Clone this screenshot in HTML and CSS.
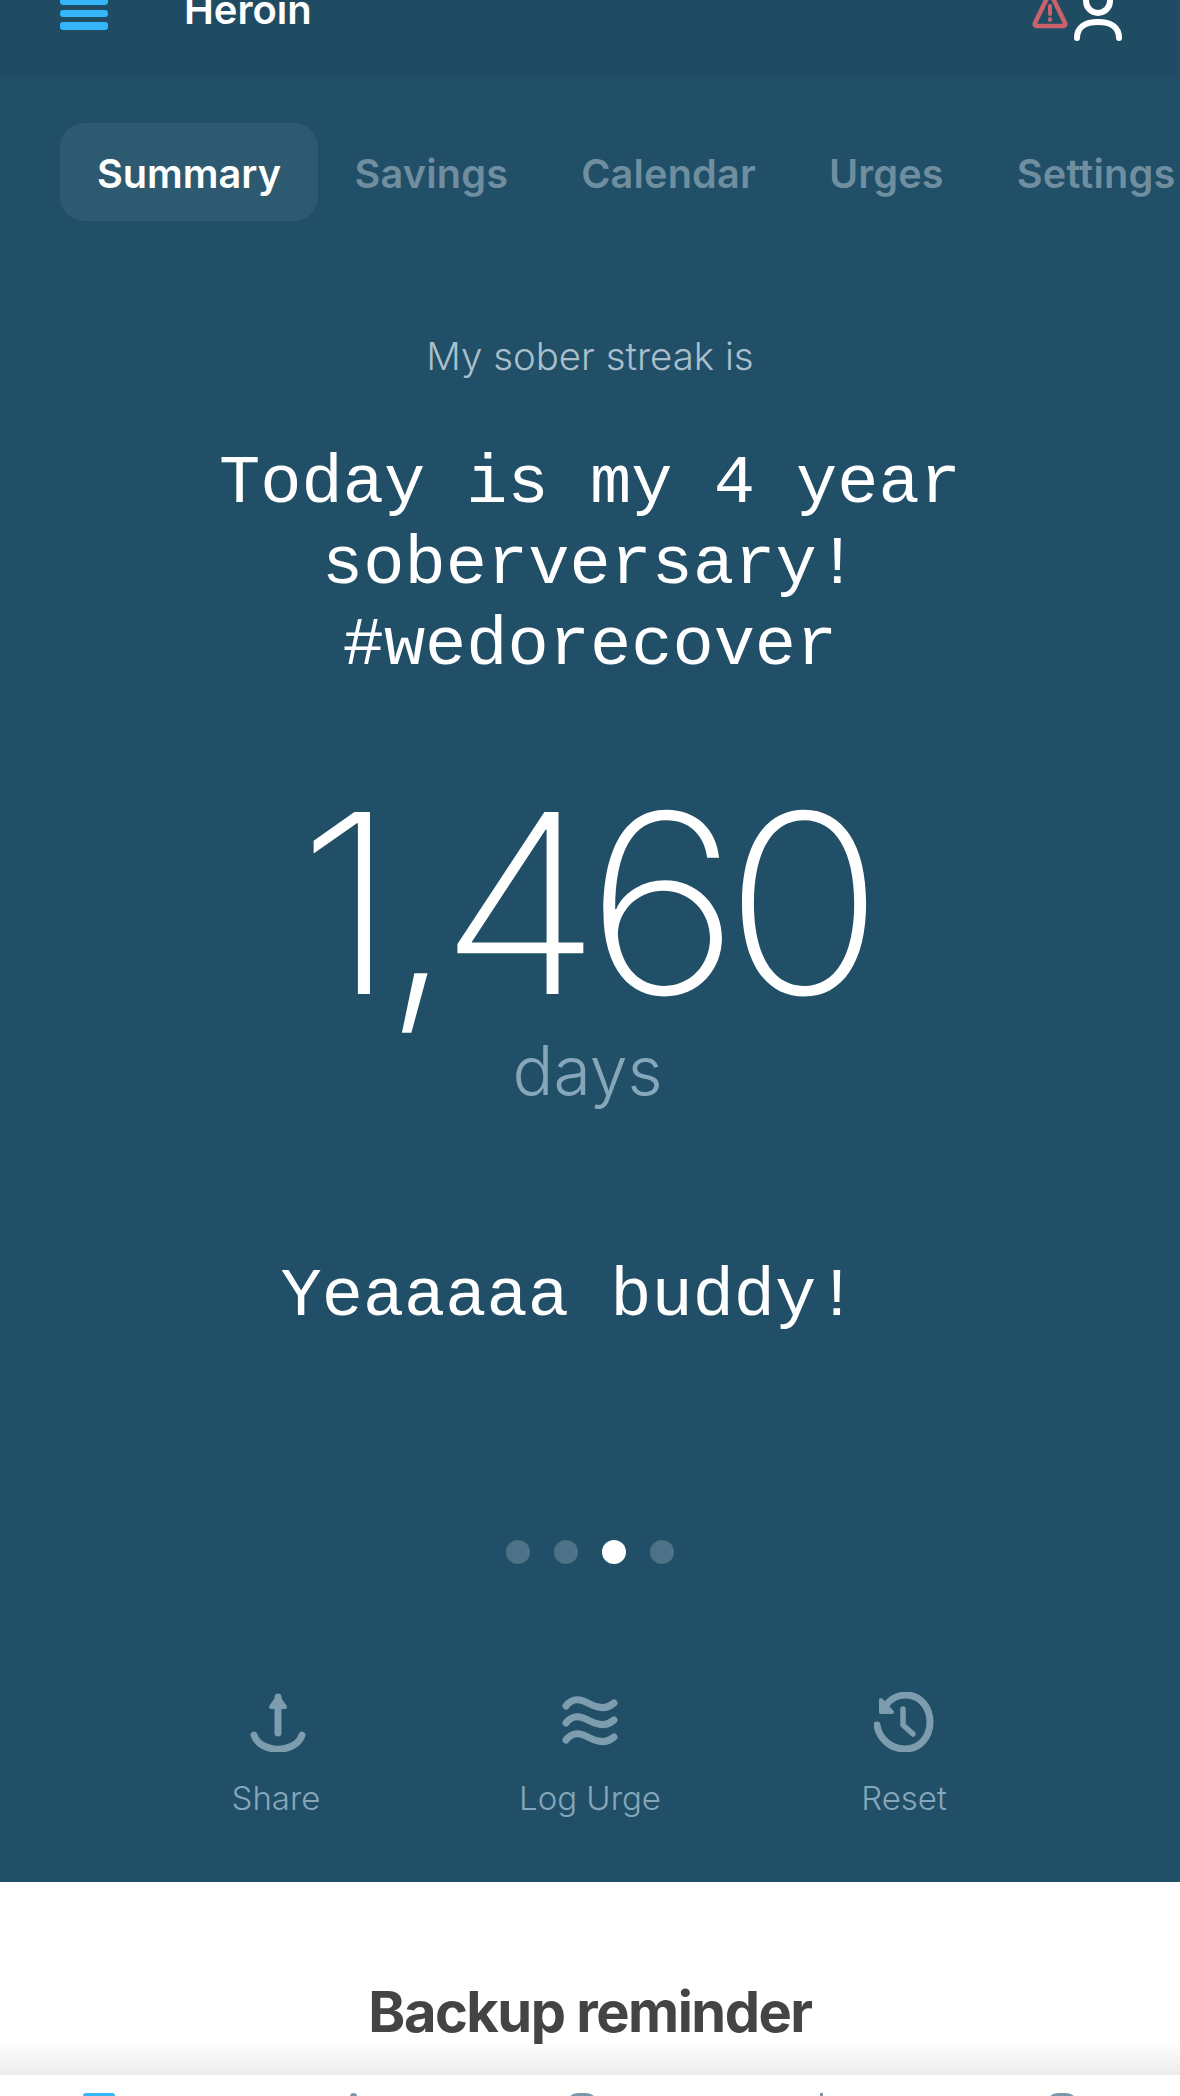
FILE: index.html
```html
<!DOCTYPE html>
<html lang="en">
<head>
    <meta charset="UTF-8" />
    <meta name="viewport" content="width=device-width, initial-scale=1.0" />
    <title>Heroin</title>
    <link rel="stylesheet" href="styles.css">
</head>
<body>

    <header class="top-bar">
        <svg class="menu-icon" width="48" height="30" viewBox="0 0 48 30">
            <rect x="0" y="-6" width="48" height="11" rx="3" />
            <rect x="0" y="10" width="48" height="7" rx="3" />
            <rect x="0" y="22" width="48" height="8" rx="3" />
        </svg>
        <div class="top-title">Heroin</div>
        <svg class="alert-icon" width="36" height="30" viewBox="0 0 36 30">
            <path d="M18 -8 L33 23 Q34 26 31 26 L5 26 Q2 26 3 23 Z" />
            <line class="alert-mark" x1="18" y1="6" x2="18" y2="14" />
            <line class="alert-mark" x1="18" y1="19" x2="18" y2="20" />
        </svg>
        <svg class="user-icon" width="48" height="42" viewBox="0 0 48 42">
            <circle cx="24" cy="1" r="12" />
            <path d="M3 38 C3 27 11 22 24 22 C37 22 45 27 45 38" />
        </svg>
    </header>

    <main class="streak-panel">
        <nav class="tabs">
            <div class="tab tab-active">Summary</div>
            <div class="tab">Savings</div>
            <div class="tab">Calendar</div>
            <div class="tab">Urges</div>
            <div class="tab">Settings</div>
        </nav>

        <p class="streak-intro">My sober streak is</p>
        <h1 class="streak-quote">Today is my 4 year<br>soberversary!<br>#wedorecover</h1>

        <div class="day-count">1,460</div>
        <div class="day-unit">days</div>

        <p class="streak-note">Yeaaaaa buddy!</p>

        <div class="dots">
            <span class="dot"></span>
            <span class="dot"></span>
            <span class="dot dot-active"></span>
            <span class="dot"></span>
        </div>

        <div class="actions">
            <div class="action">
                <svg width="60" height="60" viewBox="-2 0 60 60">
                    <path d="M30 41 L30 5" />
                    <path class="solid" d="M23 15 L30 5 L37 15 Z" />
                    <path d="M6 43 C12 62 48 62 54 43" />
                </svg>
                <span>Share</span>
            </div>
            <div class="action">
                <svg class="waves" width="60" height="60" viewBox="0 0 60 60">
                    <path d="M6 14 C13 5 21 7 30 12 C39 17 47 17 54 11" />
                    <path d="M6 31 C13 22 21 24 30 29 C39 34 47 34 54 28" />
                    <path d="M6 48 C13 39 21 41 30 46 C39 51 47 51 54 45" />
                </svg>
                <span>Log Urge</span>
            </div>
            <div class="action">
                <svg width="60" height="60" viewBox="0 0 60 60">
                    <path class="solid" d="M7 8 L7 20 L18 20 Z" />
                    <path d="M9 18 C14 8 23 3 32 3 C46 3 56 15 56 30 C56 45 46 57 31 57 C17 57 5 47 3 33" />
                    <path class="clock-hand" d="M29 17 L29 33 L39 42" />
                </svg>
                <span>Reset</span>
            </div>
        </div>
    </main>

    <section class="reminder">
        <h2>Backup reminder</h2>
    </section>

    <footer class="bottom-bar">
        <span class="bottom-item bottom-home"></span>
        <span class="bottom-item bottom-peak"></span>
        <span class="bottom-item bottom-round"></span>
        <span class="bottom-item bottom-slash"></span>
        <span class="bottom-item bottom-round"></span>
    </footer>

</body>
</html>
```

FILE: styles.css
```css
body {
    font-family: Inter, "Liberation Sans", sans-serif;
    margin: 0;
    padding: 0;
    height: 2096px;
    overflow: hidden;
    background-color: #fff;
}

/* top bar, scrolled so its upper part is off screen */
.top-bar {
    display: flex;
    align-items: flex-start;
    height: 76px;
    padding: 0 58px 0 60px;
    background-color: #1f4c63;
    box-sizing: border-box;
    overflow: hidden;
}

.menu-icon {
    fill: #35b6fb;
    flex: none;
}

.top-title {
    margin: -12px 0 0 76px;
    font-size: 40px;
    line-height: 44px;
    font-weight: 600;
    color: #fff;
    flex: 1;
}

.alert-icon {
    flex: none;
    margin-right: 6px;
}

.alert-icon path {
    fill: none;
    stroke: #c9626a;
    stroke-width: 4.5;
    stroke-linejoin: round;
}

.alert-mark {
    stroke: #c9626a;
    stroke-width: 4;
    stroke-linecap: round;
}

.user-icon {
    flex: none;
    fill: none;
    stroke: #fff;
    stroke-width: 6;
    stroke-linecap: round;
}

.streak-panel {
    height: 1806px;
    padding-top: 47px;
    box-sizing: border-box;
    background-color: #214f67;
    overflow: hidden;
}

.tabs {
    display: flex;
    padding-left: 60px;
    white-space: nowrap;
    overflow: hidden;
}

.tab {
    padding: 4px 36.5px 0;
    line-height: 94px;
    font-size: 39.7px;
    font-weight: 600;
    letter-spacing: 0.15px;
    color: #6f8e9f;
}

.tab-active {
    padding: 4px 37px 0;
    background-color: #2d5a70;
    border-radius: 24px;
    letter-spacing: 0;
    color: #fff;
}

.streak-intro {
    margin: 112px 0 0;
    font-size: 38.4px;
    line-height: 46px;
    font-weight: 300;
    color: #a9bfcc;
    text-align: center;
}

.streak-quote {
    margin: 65px 0 0;
    font-family: "Liberation Mono", monospace;
    font-size: 68.7px;
    line-height: 81px;
    font-weight: 400;
    color: #fff;
    text-align: center;
}

.day-count {
    margin-top: 96px;
    padding-right: 14px;
    font-size: 250px;
    line-height: 240px;
    font-weight: 150;
    letter-spacing: -15px;
    color: #fff;
    text-align: center;
    transform: scaleX(1.06);
}

.day-unit {
    margin-top: 7px;
    padding-right: 5px;
    font-size: 68px;
    line-height: 80px;
    font-weight: 300;
    color: #86a7ba;
    text-align: center;
}

.streak-note {
    margin: 147px 42px 0 0;
    font-family: "Liberation Mono", monospace;
    font-size: 68.7px;
    line-height: 81px;
    color: #fff;
    text-align: center;
}

.dots {
    display: flex;
    justify-content: center;
    gap: 24px;
    margin-top: 202px;
}

.dot {
    width: 24px;
    height: 24px;
    border-radius: 50%;
    background-color: #4d7186;
}

.dot-active {
    background-color: #fff;
}

.actions {
    display: grid;
    grid-template-columns: repeat(3, 314px);
    justify-content: center;
    margin-top: 128px;
}

.action {
    display: flex;
    flex-direction: column;
    align-items: center;
    font-size: 33px;
    font-weight: 300;
    color: #86a7ba;
}

.action svg {
    fill: none;
    stroke: #7d9dae;
    stroke-width: 7;
    stroke-linecap: round;
    stroke-linejoin: round;
}

.action .solid {
    fill: #7d9dae;
    stroke-width: 4;
}

.action .clock-hand {
    stroke-width: 5.5;
}

.action span {
    margin-top: 27px;
    line-height: 38px;
}

.reminder {
    height: 193px;
    box-sizing: border-box;
    padding-top: 100px;
    background: linear-gradient(to bottom, #fff 158px, #ececec 193px);
}

.reminder h2 {
    margin: 0;
    font-size: 56px;
    line-height: 60px;
    font-weight: 700;
    letter-spacing: -1.5px;
    color: #444;
    text-align: center;
}

.bottom-bar {
    display: block;
    position: relative;
    height: 21px;
    background-color: #fff;
    overflow: hidden;
}

/* tops of the tab icons peeking in at the screen edge */
.bottom-item {
    position: absolute;
    top: 18px;
    width: 32px;
    height: 12px;
    background-color: #7a98a9;
}

.bottom-home {
    left: 83px;
    background-color: #35b6fb;
    border-radius: 3px;
}

.bottom-peak {
    left: 350px;
    width: 7px;
    border-radius: 4px 4px 0 0;
}

.bottom-round {
    left: 566px;
    border-radius: 16px 16px 0 0;
}

.bottom-round:last-child {
    left: 1046px;
}

.bottom-slash {
    left: 820px;
    width: 3px;
}
```
